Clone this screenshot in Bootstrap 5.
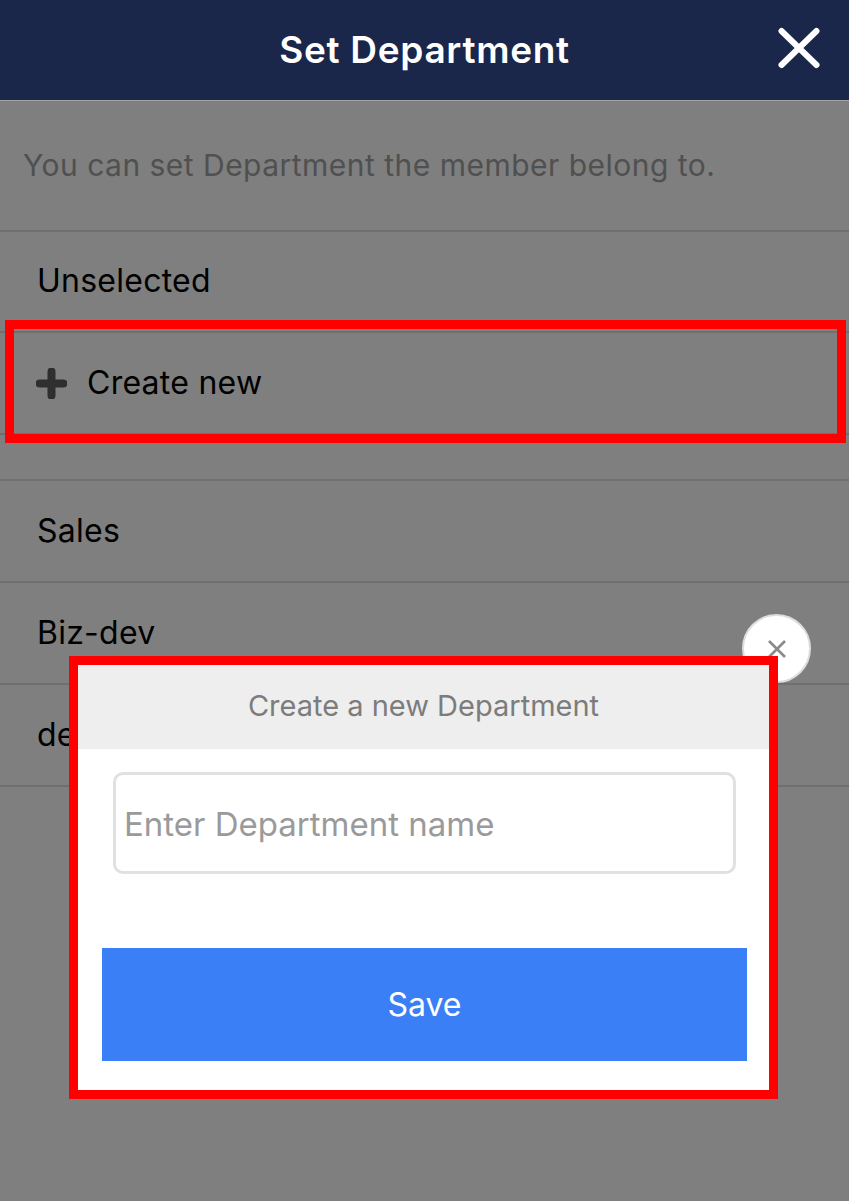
<!DOCTYPE html>
<html lang="en">
<head>
<meta charset="utf-8">
<title>Set Department</title>
<link href="https://cdn.jsdelivr.net/npm/bootstrap@5.3.0/dist/css/bootstrap.min.css" rel="stylesheet">
<style>
html,body{height:100%;}
body{background:#7f7f7f;font-family:Inter,"Liberation Sans",sans-serif;color:#000;overflow:hidden;}
.app-screen{position:relative;width:849px;height:1201px;overflow:hidden;}
.top-bar{height:101px;background:#1a274a;border-bottom:1px solid #a3a3a3;padding:0 26px;}
.top-title{font-size:37px;font-weight:600;color:#fff;letter-spacing:.7px;}
.top-close{position:absolute;right:29px;top:27px;line-height:0;}
.hint-text{height:131px;margin:0 0 -1px;padding-left:23px;padding-bottom:1px;font-size:30px;letter-spacing:.48px;color:#505050;border-bottom:2px solid #6f6f6f;}
.dept-list{--bs-list-group-bg:transparent;--bs-list-group-border-color:#6f6f6f;--bs-list-group-color:#000;border-radius:0;}
.dept-row{height:102px;padding:0 0 0 37px;font-size:32px;letter-spacing:.25px;border-width:0 0 2px;display:flex;align-items:center;gap:20px;}
.plus-glyph{margin-left:-1px;}
.dept-gap{height:46px;border-bottom:2px solid #6f6f6f;}
.mark-frame{position:absolute;border:9px solid #f00;pointer-events:none;}
.frame-row{left:5px;top:320px;width:841px;height:123px;}
.frame-dialog{left:69px;top:656px;width:709px;height:443px;}
.dialog-box{position:absolute;left:78px;top:665px;width:691px;height:425px;background:#fff;}
.dialog-head{height:84px;padding-bottom:2px;background:#eee;font-size:29px;color:#7c7c7c;}
.dialog-body{padding:23px 33px 29px 24px;}
.dialog-input{height:102px;width:623px;margin-left:11px;border:3px solid #e1e1e1;border-radius:10px;padding:2px 8px 0;font-size:33px;box-shadow:none;}
.dialog-input::placeholder{color:#9a9a9a;opacity:1;}
.dialog-save{width:645px;height:113px;margin-top:74px;background:#3a7ff5;border:0;border-radius:0;color:#fff;font-size:32px;}
.dialog-close{position:absolute;left:742px;top:614px;width:69px;height:69px;border-radius:50%;background:#fff;border:2px solid #ddd;display:flex;align-items:center;justify-content:center;}
</style>
</head>
<body>
<div class="app-screen">
  <header class="top-bar d-flex align-items-center justify-content-center">
    <span class="top-title">Set Department</span>
    <span class="top-close">
      <svg width="42" height="42" viewBox="0 0 42 42"><path d="M3.500 4L38.500 38M38.500 4L3.500 38" stroke="#fff" stroke-width="6" stroke-linecap="round"/></svg>
    </span>
  </header>
  <p class="hint-text d-flex align-items-center">You can set Department the member belong to.</p>
  <div class="list-group dept-list">
    <div class="list-group-item dept-row">Unselected</div>
    <div class="list-group-item dept-row">
      <svg class="plus-glyph" width="31" height="31" viewBox="0 0 31 31"><path d="M15.500 3.500V27.500M3.500 15.500H27.500" stroke="#2f2f2f" stroke-width="8" stroke-linecap="round"/></svg>
      <span>Create new</span>
    </div>
  </div>
  <div class="dept-gap"></div>
  <div class="list-group dept-list">
    <div class="list-group-item dept-row">Sales</div>
    <div class="list-group-item dept-row">Biz-dev</div>
    <div class="list-group-item dept-row">dev</div>
  </div>

  <div class="mark-frame frame-row"></div>

  <button type="button" class="dialog-close p-0" aria-label="Close">
    <svg width="20" height="20" viewBox="0 0 20 20"><path d="M2 2L18 18M18 2L2 18" stroke="#8a8a8a" stroke-width="2.6"/></svg>
  </button>
  <div class="dialog-box">
    <div class="dialog-head d-flex align-items-center justify-content-center">Create a new Department</div>
    <div class="dialog-body">
      <input type="text" class="form-control dialog-input" placeholder="Enter Department name">
      <button type="button" class="btn dialog-save d-block">Save</button>
    </div>
  </div>
  <div class="mark-frame frame-dialog"></div>
</div>
<script src="https://cdn.jsdelivr.net/npm/bootstrap@5.3.0/dist/js/bootstrap.bundle.min.js"></script>
</body>
</html>
